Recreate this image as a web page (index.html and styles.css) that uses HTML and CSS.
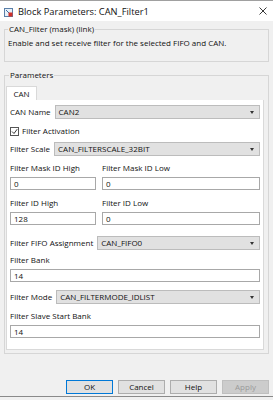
FILE: index.html
```html
<!DOCTYPE html>
<html>
<head>
<meta charset="utf-8">
<link rel="stylesheet" href="styles.css">
</head>
<body>
<div class="window">
  <div class="titlebar">
    <svg class="appicon" width="9" height="9" viewBox="0 0 9 9">
      <rect x="0.5" y="0.5" width="8" height="8" fill="#e8f0f8" stroke="#5a7fa8"/>
      <path d="M2 2 L6 6" stroke="#3a6ea5" stroke-width="1"/>
      <rect x="4.5" y="4.5" width="4" height="4" fill="#d0302a"/>
    </svg>
    <span class="title">Block Parameters: CAN_Filter1</span>
    <svg class="close" width="8" height="8" viewBox="0 0 8 8">
      <path d="M0.5 0.5 L7.5 7.5 M7.5 0.5 L0.5 7.5" stroke="#222" stroke-width="0.9"/>
    </svg>
  </div>
  <div class="body">
    <fieldset class="group desc">
      <legend>CAN_Filter (mask) (link)</legend>
      <p>Enable and set receive filter for the selected FIFO and CAN.</p>
    </fieldset>
    <fieldset class="group params">
      <legend>Parameters</legend>
      <div class="tabs"><div class="tab">CAN</div></div>
      <div class="panel">
        <div class="row r-name"><span class="lbl">CAN Name</span><div class="select">CAN2<i class="arrow"></i></div></div>
        <div class="row r-check"><span class="checkbox"><svg width="7" height="7" viewBox="0 0 7 7"><path d="M1 3.5 L3 5.5 L6.2 1.2" fill="none" stroke="#222" stroke-width="0.9"/></svg></span><span class="lbl">Filter Activation</span></div>
        <div class="row r-scale"><span class="lbl">Filter Scale</span><div class="select">CAN_FILTERSCALE_32BIT<i class="arrow"></i></div></div>
        <div class="grid2 r-l1"><span class="lbl">Filter Mask ID High</span><span class="lbl">Filter Mask ID Low</span></div>
        <div class="grid2 r-i1"><div class="input">0</div><div class="input">0</div></div>
        <div class="grid2 r-l2"><span class="lbl">Filter ID High</span><span class="lbl">Filter ID Low</span></div>
        <div class="grid2 r-i2"><div class="input">128</div><div class="input">0</div></div>
        <div class="row r-fifo"><span class="lbl">Filter FIFO Assignment</span><div class="select">CAN_FIFO0<i class="arrow"></i></div></div>
        <div class="lbl r-l3">Filter Bank</div>
        <div class="input r-i3">14</div>
        <div class="row r-mode"><span class="lbl">Filter Mode</span><div class="select">CAN_FILTERMODE_IDLIST<i class="arrow"></i></div></div>
        <div class="lbl r-l4">Filter Slave Start Bank</div>
        <div class="input r-i4">14</div>
      </div>
    </fieldset>
    <div class="buttons">
      <button class="btn default">OK</button>
      <button class="btn">Cancel</button>
      <button class="btn">Help</button>
      <button class="btn disabled">Apply</button>
    </div>
  </div>
</div>
</body>
</html>
```
FILE: styles.css
```css
html, body {
  margin: 0;
  padding: 0;
}
body {
  width: 273px;
  height: 400px;
  background: #f0f0f0;
  font-family: "Open Sans", "Noto Sans", sans-serif;
  font-size: 8px;
  color: #111;
  overflow: hidden;
}
.window {
  height: 397px;
  border-top: 1px solid #a0a0a0;
  border-bottom: 1px solid #8a8a8a;
  box-sizing: border-box;
  display: flex;
  flex-direction: column;
}
.titlebar {
  height: 20px;
  background: #ffffff;
  display: flex;
  align-items: center;
  padding-left: 4px;
  padding-right: 6px;
  flex: none;
}
.appicon { flex: none; margin-top: 2px; }
.title { margin-left: 5px; flex: 1; font-size: 9.3px; margin-top: 1px; }
.close { flex: none; }
.body {
  flex: 1;
  display: flex;
  flex-direction: column;
  padding: 0 4px 0 4px;
}
.group {
  margin: 0;
  border: 1px solid #d6d6d6;
  padding: 0;
  min-width: 0;
}
.group legend {
  padding: 0 1px;
  margin-left: 3px;
  line-height: 10px;
}
.desc {
  margin-top: 3px;
  height: 38px;
  box-sizing: border-box;
}
.desc p {
  margin: 4px 0 0 3px;
  line-height: 10px;
}
.params {
  margin-top: 8px;
  padding: 0 4px 3px 1px;
}
.tabs {
  display: flex;
  margin-top: 6px;
}
.tab {
  width: 31px;
  height: 14px;
  box-sizing: border-box;
  background: #fff;
  border: 1px solid #d9d9d9;
  border-bottom: none;
  text-align: center;
  line-height: 13px;
}
.panel {
  background: #fff;
  border: 1px solid #d9d9d9;
  border-top: none;
  padding: 5px 3px 11px 3px;
  display: flex;
  flex-direction: column;
}
.row {
  display: flex;
  align-items: center;
  gap: 4px;
  height: 14px;
}
.lbl { white-space: nowrap; line-height: 12px; height: 12px; }
.select {
  flex: 1;
  height: 14px;
  box-sizing: border-box;
  background: #e1e1e1;
  border: 1px solid #bcbcbc;
  padding-left: 3px;
  line-height: 12px;
  position: relative;
}
.arrow {
  position: absolute;
  right: 5px;
  top: 5px;
  width: 0;
  height: 0;
  border-left: 2.5px solid transparent;
  border-right: 2.5px solid transparent;
  border-top: 3px solid #333;
}
.checkbox {
  width: 9px;
  height: 9px;
  box-sizing: border-box;
  border: 1px solid #555;
  display: flex;
  align-items: center;
  justify-content: center;
  margin-right: -1px;
}
.grid2 {
  display: grid;
  grid-template-columns: 86px 1fr;
  column-gap: 6px;
}
.input {
  height: 13px;
  box-sizing: border-box;
  background: #fff;
  border: 1px solid #a8a8a8;
  padding-left: 3px;
  line-height: 11px;
}
.r-check { margin-top: 5px; }
.r-scale { margin-top: 4px; }
.r-l1 { margin-top: 6px; }
.r-i1 { margin-top: 3px; }
.r-l2 { margin-top: 7px; }
.r-i2 { margin-top: 3px; }
.r-fifo { margin-top: 11px; }
.r-l3 { margin-top: 4px; }
.r-i3 { margin-top: 3px; }
.r-mode { margin-top: 8px; }
.r-l4 { margin-top: 6px; }
.r-i4 { margin-top: 3px; }
.buttons {
  display: flex;
  justify-content: flex-end;
  gap: 5px;
  margin-top: auto;
  margin-bottom: 2px;
}
.btn {
  width: 47px;
  height: 14px;
  padding: 0;
  font: inherit;
  color: #111;
  background: #e1e1e1;
  border: 1px solid #adadad;
  box-sizing: border-box;
  line-height: 12px;
}
.btn.default { border-color: #0078d7; }
.btn.disabled { color: #9a9a9a; background: #cccccc; border-color: #bfbfbf; }
```
